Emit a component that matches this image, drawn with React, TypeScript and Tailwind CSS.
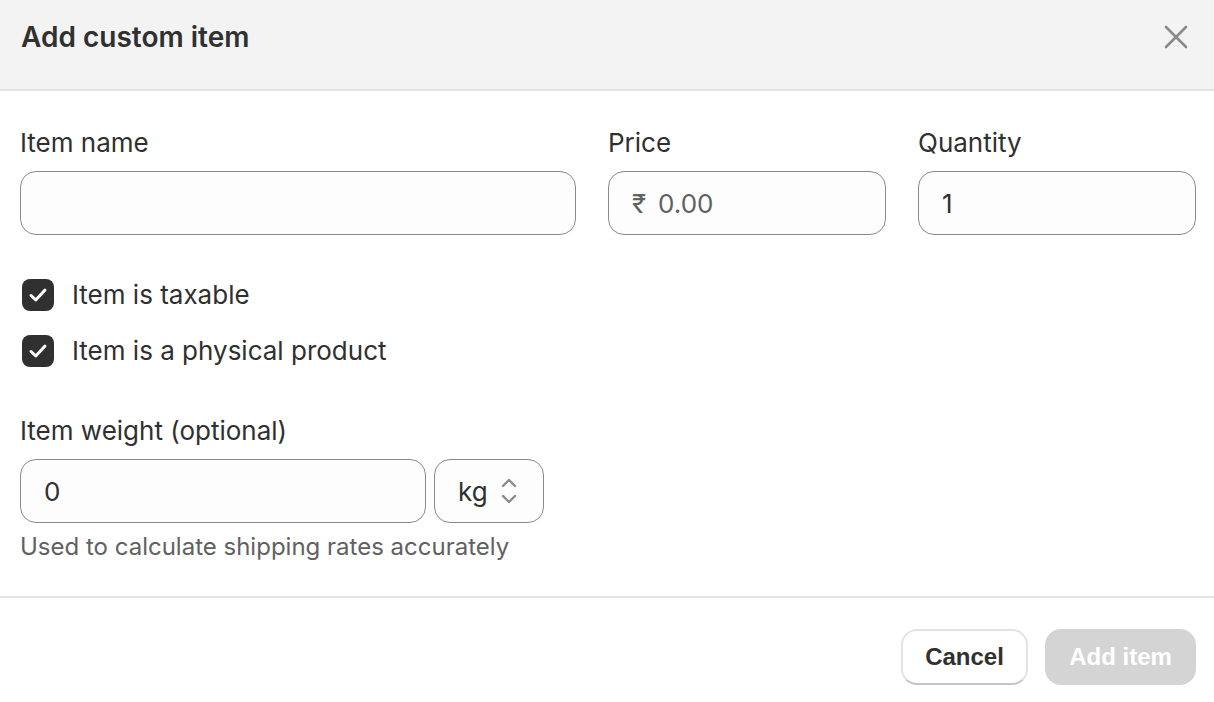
import React from 'react';

const inter = { fontFamily: 'Inter, "Noto Sans", sans-serif' };

function CloseIcon() {
  return (
    <svg width="24" height="24" viewBox="0 0 24 24" fill="none">
      <path d="M2 2L22 22M22 2L2 22" stroke="#8a8a8a" strokeWidth="2.6" strokeLinecap="round" />
    </svg>
  );
}

function CheckBox({ label }: { label: string }) {
  return (
    <label className="flex items-center h-[40px] gap-[18px] cursor-pointer">
      <span className="ml-[2px] w-[32px] h-[32px] rounded-[8px] bg-[#303030] flex items-center justify-center">
        <svg width="32" height="32" viewBox="0 0 32 32" fill="none">
          <path d="M9 16.5L13.8 21L23 11" stroke="#fff" strokeWidth="3" strokeLinecap="round" strokeLinejoin="round" />
        </svg>
      </span>
      <span className="text-[26px] leading-[36px] text-[#303030]">{label}</span>
    </label>
  );
}

function Field({ label, children }: { label: string; children: React.ReactNode }) {
  return (
    <div className="flex flex-col gap-[10px]">
      <span className="text-[26px] leading-[36px] text-[#303030]">{label}</span>
      {children}
    </div>
  );
}

const inputCls =
  'h-[64px] rounded-[16px] border border-[#8a8a8a] bg-[#fdfdfd] flex items-center px-[23px] text-[26px] text-[#303030]';

export default function App() {
  return (
    <div className="w-[1214px] h-[702px] bg-white overflow-hidden" style={inter}>
      {/* Header */}
      <div className="h-[91px] bg-[#f3f3f3] border-b-2 border-[#e3e3e3] flex justify-between pl-[21px] pr-[26px] pt-[17px]">
        <h2 className="text-[28px] leading-[40px] font-semibold text-[#303030]">Add custom item</h2>
        <button className="w-[24px] h-[24px] mt-[8px]">
          <CloseIcon />
        </button>
      </div>

      {/* Body */}
      <div className="pl-[20px] pr-[18px] pt-[34px] pb-[33px] border-b-2 border-[#e3e3e3]">
        <div className="grid grid-cols-[556px_278px_278px] gap-x-[32px]">
          <Field label="Item name">
            <div className={inputCls}></div>
          </Field>
          <Field label="Price">
            <div className={inputCls}>
              <span className="text-[#616161]">₹</span>
              <span className="ml-[12px] text-[#616161]">0.00</span>
            </div>
          </Field>
          <Field label="Quantity">
            <div className={inputCls}>1</div>
          </Field>
        </div>

        <div className="mt-[40px] flex flex-col gap-[16px]">
          <CheckBox label="Item is taxable" />
          <CheckBox label="Item is a physical product" />
        </div>

        <div className="mt-[42px]">
          <Field label="Item weight (optional)">
            <div className="flex gap-[8px]">
              <div className={inputCls + ' w-[406px]'}>0</div>
              <div className="h-[64px] w-[110px] rounded-[16px] border border-[#8a8a8a] bg-[#fdfdfd] flex items-center pl-[23px] gap-[12px] text-[26px] text-[#303030]">
                <span>kg</span>
                <svg width="18" height="28" viewBox="0 0 18 28" fill="none">
                  <path d="M3 9L9 3L15 9M3 19L9 25L15 19" stroke="#8a8a8a" strokeWidth="2.4" strokeLinecap="round" strokeLinejoin="round" />
                </svg>
              </div>
            </div>
          </Field>
          <p className="mt-[8px] text-[24px] leading-[32px] text-[#616161]">Used to calculate shipping rates accurately</p>
        </div>
      </div>

      {/* Footer */}
      <div className="flex justify-end gap-[17px] pr-[18px] pt-[31px]" style={{ fontFamily: '"Liberation Sans", Arial, sans-serif' }}>
        <button className="h-[56px] w-[127px] rounded-[16px] bg-white border-2 border-[#e3e3e3] border-b-[#c4c4c4] text-[24px] font-bold text-[#303030]">
          Cancel
        </button>
        <button className="h-[56px] w-[151px] rounded-[16px] bg-[#d4d4d4] text-[24px] font-bold text-white">
          Add item
        </button>
      </div>
    </div>
  );
}
